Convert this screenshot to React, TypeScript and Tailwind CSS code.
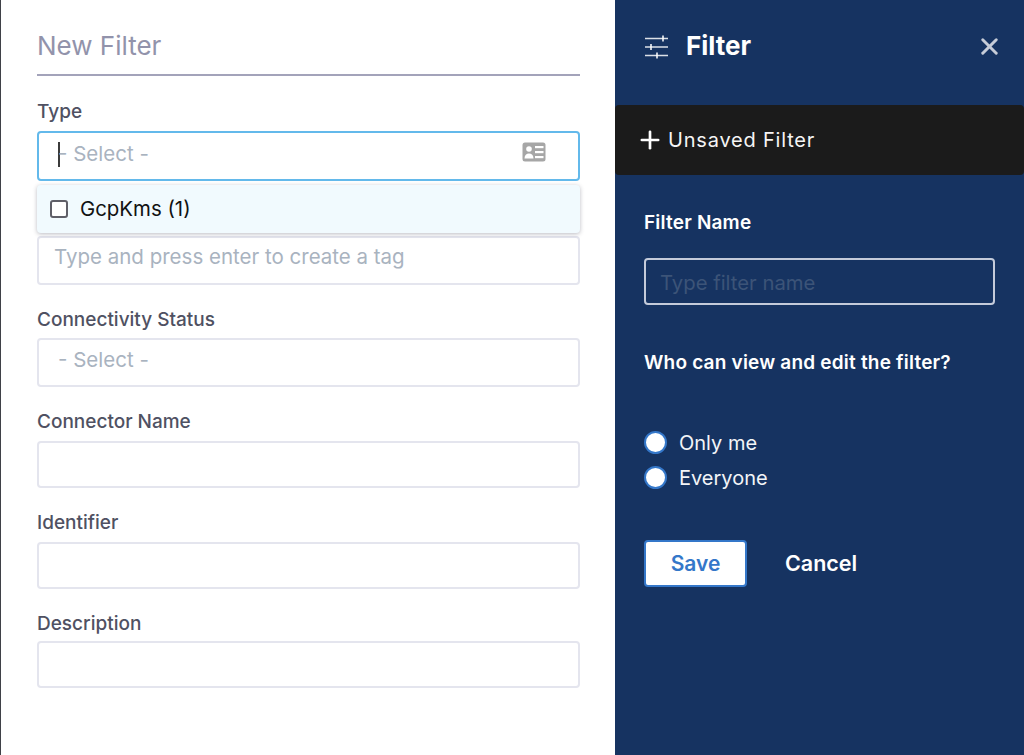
import { Plus, X } from "lucide-react";

const font = "font-['Inter','Noto_Sans',sans-serif]";

function FieldLabel({ children, className = "" }: { children: string; className?: string }) {
  return <div className={`text-[19px] leading-[22px] font-medium text-[#4f5162] ${className}`}>{children}</div>;
}

function TextBox({ className = "", placeholder }: { className?: string; placeholder?: string }) {
  return (
    <div className={`flex items-center rounded-[4px] border-2 border-[#e4e5ee] bg-white text-[20.5px] text-[#a9b3bf] ${className}`}>
      {placeholder}
    </div>
  );
}

function ProfileCardIcon() {
  return (
    <svg className="mb-[4px]" width="24" height="20" viewBox="0 0 24 20" fill="none">
      <rect x="0.5" y="0.5" width="23" height="19" rx="2.5" fill="#a6a6a6" />
      <circle cx="7" cy="7" r="2.8" fill="#fff" />
      <path d="M2.5 16.5c0-3.4 2-5 4.5-5s4.5 1.6 4.5 5z" fill="#fff" />
      <rect x="13" y="4" width="8.5" height="2.2" fill="#fff" />
      <rect x="13" y="9" width="8.5" height="2.2" fill="#fff" />
      <rect x="13" y="14" width="8.5" height="2.2" fill="#fff" />
    </svg>
  );
}

function SlidersIcon() {
  return (
    <svg width="25" height="24" viewBox="0 0 25 24" stroke="#fff" fill="none" strokeWidth="1.5">
      <path d="M1 3.5h23M1 12h23M1 20.5h23" strokeOpacity="0.85" />
      <path d="M19 0.5v6M7 9v6M13 17.5v6" />
    </svg>
  );
}

function LeftPanel() {
  return (
    <div className="w-[615px] h-full shrink-0 bg-white border-l-[1px] border-[#3f4147] pl-[36px] pr-[35px]">
      <div className="h-[76px] pt-[29px] border-b-[2px] border-[#a3a3ba] text-[26px] leading-[34px] text-[#9293ab]">
        New Filter
      </div>
      <FieldLabel className="mt-[25px]">Type</FieldLabel>
      <div className="relative mt-[8px]">
        <div className="h-[50px] flex items-center justify-between rounded-[4px] border-2 border-[#63b9eb] bg-white pl-[19px] pr-[32px] pb-[4px] text-[20.5px] text-[#a9b3bf]">
          <span className="flex items-center">
            <span className="w-[2px] h-[25px] bg-[#3b3b3b] mr-[-2px]" />
            <span>- Select -</span>
          </span>
          <ProfileCardIcon />
        </div>
        <div className="absolute left-0 right-0 top-[54px] h-[48px] flex items-center rounded-[4px] bg-[#f1fafe] pl-[13px] shadow-[0_1px_4px_rgba(60,60,80,0.35)]">
          <span className="w-[18px] h-[18px] rounded-[3px] border-2 border-[#5f5f68] bg-white" />
          <span className="ml-[12px] text-[20.4px] text-[#121212]">GcpKms (1)</span>
        </div>
      </div>
      <TextBox className="h-[49px] mt-[55px] pl-[15px] pb-[6px]" placeholder="Type and press enter to create a tag" />
      <FieldLabel className="mt-[24px]">Connectivity Status</FieldLabel>
      <TextBox className="h-[49px] mt-[7px] pl-[19px] pb-[4px]" placeholder="- Select -" />
      <FieldLabel className="mt-[24px]">Connector Name</FieldLabel>
      <TextBox className="h-[47px] mt-[8px]" />
      <FieldLabel className="mt-[24px]">Identifier</FieldLabel>
      <TextBox className="h-[47px] mt-[8px]" />
      <FieldLabel className="mt-[24px]">Description</FieldLabel>
      <TextBox className="h-[47px] mt-[6px]" />
    </div>
  );
}

function Radio({ label }: { label: string }) {
  return (
    <div className="flex items-center h-[35px]">
      <span className="w-[23px] h-[23px] rounded-full bg-white border-2 border-[#3477c9]" />
      <span className="ml-[12px] text-[20px] text-[#f3f5f8]">{label}</span>
    </div>
  );
}

function RightPanel() {
  return (
    <div className="flex-1 h-full bg-[#163361]">
      <div className="h-[105px] pl-[29px] pr-[21px] pt-[26px] flex items-start justify-between">
        <div className="flex items-center h-[42px]">
          <SlidersIcon />
          <span className="ml-[17px] mb-[4px] text-[26px] font-bold text-white">Filter</span>
        </div>
        <X className="mt-[7px] text-[#c6ccd8]" size={27} strokeWidth={2.6} />
      </div>
      <div className="h-[70px] flex items-center pl-[21px] rounded-[4px] bg-[#1b1b1b]">
        <Plus className="text-white" size={28} strokeWidth={2.3} />
        <span className="ml-[4px] text-[20px] tracking-[0.8px] text-[#f5f5f5]">Unsaved Filter</span>
      </div>
      <div className="pl-[29px] pr-[29px]">
        <div className="mt-[37px] text-[19px] leading-[22px] font-semibold tracking-[0.2px] text-white">Filter Name</div>
        <div className="mt-[24px] h-[47px] flex items-center rounded-[4px] border-2 border-[#c4cbda] pl-[14px] pt-[3px] text-[20.3px] text-[#3c5478]">
          Type filter name
        </div>
        <div className="mt-[47px] text-[19px] leading-[22px] font-semibold tracking-[0.2px] text-white">Who can view and edit the filter?</div>
        <div className="mt-[51px]">
          <Radio label="Only me" />
          <Radio label="Everyone" />
        </div>
        <div className="mt-[45px] flex items-center">
          <div className="w-[103px] h-[47px] flex items-center justify-center rounded-[4px] bg-white border-2 border-[#3477c9] text-[21px] font-semibold text-[#3477c9]">
            Save
          </div>
          <div className="ml-[38px] text-[21.5px] font-semibold text-white">Cancel</div>
        </div>
      </div>
    </div>
  );
}

export default function App() {
  return (
    <div className={`w-[1024px] h-[755px] flex overflow-hidden bg-white ${font}`}>
      <LeftPanel />
      <RightPanel />
    </div>
  );
}
